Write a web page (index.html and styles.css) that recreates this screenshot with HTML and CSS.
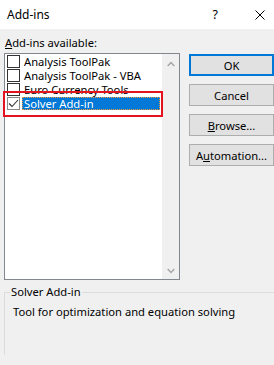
FILE: index.html
```html
<!DOCTYPE html>
<html lang="en">
<head>
    <meta charset="UTF-8">
    <title>Add-ins</title>
    <link rel="stylesheet" href="styles.css">
</head>
<body>
    <div class="titlebar">
        <span class="title">Add-ins</span>
        <span class="help">?</span>
        <svg class="close" width="10" height="10" viewBox="0 0 10 10">
            <path d="M0.5 0.5 L9.5 9.5 M9.5 0.5 L0.5 9.5" stroke="#000" stroke-width="1" fill="none"/>
        </svg>
    </div>

    <div class="content">
        <div class="main">
            <div class="left">
                <div class="label"><u>A</u>dd-ins available:</div>
                <div class="listbox">
                    <div class="items">
                        <div class="row"><span class="check"></span><span class="name">Analysis ToolPak</span></div>
                        <div class="row"><span class="check"></span><span class="name">Analysis ToolPak - VBA</span></div>
                        <div class="row"><span class="check"></span><span class="name">Euro Currency Tools</span></div>
                        <div class="row selected">
                            <span class="check">
                                <svg width="11" height="11" viewBox="0 0 11 11">
                                    <polyline points="1,5.5 4,8.5 10,2" stroke="#333" stroke-width="1.1" fill="none"/>
                                </svg>
                            </span>
                            <span class="name">Solver Add-in</span>
                        </div>
                    </div>
                    <div class="scrollbar">
                        <svg width="8" height="6" viewBox="0 0 8 6">
                            <polyline points="0.7,5 4,1.5 7.3,5" stroke="#a6a6a6" stroke-width="1.5" fill="none"/>
                        </svg>
                        <svg width="8" height="6" viewBox="0 0 8 6">
                            <polyline points="0.7,1 4,4.5 7.3,1" stroke="#a6a6a6" stroke-width="1.5" fill="none"/>
                        </svg>
                    </div>
                    <div class="highlight"></div>
                </div>
            </div>

            <div class="buttons">
                <button class="default">OK</button>
                <button>Cancel</button>
                <button><u>B</u>rowse...</button>
                <button>A<u>u</u>tomation...</button>
            </div>
        </div>

        <fieldset class="info">
            <legend>Solver Add-in</legend>
            <div class="desc">Tool for optimization and equation solving</div>
        </fieldset>
    </div>
</body>
</html>
```

FILE: styles.css
```css
body {
    margin: 0;
    width: 274px;
    height: 365px;
    overflow: hidden;
    background-color: #f0f0f0;
    font-family: "Noto Sans", sans-serif;
    font-size: 11.2px;
    color: #000;
}

.titlebar {
    height: 29px;
    background-color: #fff;
    display: flex;
    align-items: center;
    padding-left: 7px;
}

.titlebar .title {
    font-size: 12px;
}

.titlebar .help {
    margin-left: auto;
    font-size: 12.5px;
    margin-right: 37px;
}

.titlebar .close {
    margin-right: 9px;
}

.content {
    padding-left: 4px;
}

.main {
    display: flex;
    align-items: flex-start;
}

.label {
    margin-top: 6px;
    line-height: 16px;
    padding-left: 1px;
    margin-bottom: 2px;
}

.listbox {
    position: relative;
    box-sizing: border-box;
    width: 176px;
    height: 227px;
    border: 1px solid #828790;
    background-color: #fff;
    display: flex;
}

.items {
    flex: 1;
}

.row {
    display: flex;
    align-items: flex-start;
    height: 14px;
    padding-left: 2px;
}

.check {
    box-sizing: border-box;
    width: 13px;
    height: 13px;
    margin-top: 1px;
    border: 1px solid #333;
    background-color: #fff;
    display: flex;
    align-items: center;
    justify-content: center;
}

.name {
    flex: 1;
    height: 13px;
    line-height: 13px;
    margin: 1px 2px 0 2px;
    padding: 0 2px;
    white-space: nowrap;
}

.selected .check {
    border-color: #8a8a8a;
}

.selected .name {
    background-color: #0078d7;
    color: #fff;
    outline: 1px dotted #f29a3a;
    outline-offset: -1px;
}

.scrollbar {
    width: 17px;
    background-color: #f0f0f0;
    display: flex;
    flex-direction: column;
    align-items: center;
    justify-content: space-between;
    padding: 7px 0 5px;
}

/* red marker drawn over the list */
.highlight {
    position: absolute;
    left: -2px;
    top: 37px;
    width: 160px;
    height: 26px;
    box-sizing: border-box;
    border: 2px solid #e3141f;
    pointer-events: none;
}

.buttons {
    margin-left: 9px;
    padding-top: 25px;
    display: flex;
    flex-direction: column;
    gap: 8px;
}

button {
    box-sizing: border-box;
    width: 85px;
    height: 22px;
    padding: 0;
    border: 1px solid #adadad;
    background-color: #e1e1e1;
    font-family: inherit;
    font-size: 11.2px;
    color: #000;
}

button.default {
    border: 2px solid #0078d7;
}

/* group box runs off the right and bottom of the window */
.info {
    margin: 4px 0 0 0;
    padding: 0 0 0 5px;
    height: 70px;
    border: 1px solid #dcdcdc;
    border-right: none;
    border-bottom: none;
}

.info legend {
    padding: 0 1px;
    line-height: 16px;
}

.desc {
    margin-top: 4px;
    padding-left: 3px;
    line-height: 16px;
}
```
